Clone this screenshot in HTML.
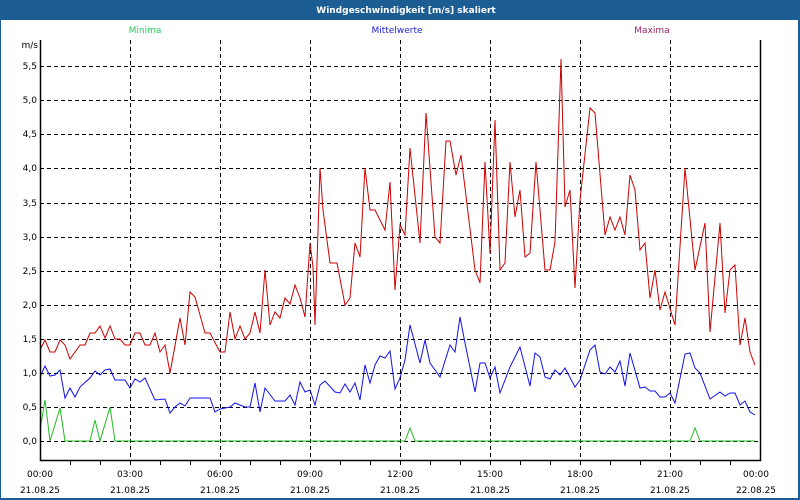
<!DOCTYPE html>
<html><head><meta charset="utf-8"><style>
html,body{margin:0;padding:0;width:800px;height:500px;overflow:hidden;background:#1c5e94}
svg{display:block}
text{font-family:"DejaVu Sans","Liberation Sans",sans-serif;font-size:9px}
</style></head><body>
<svg width="800" height="500" viewBox="0 0 800 500">
<rect x="0" y="0" width="800" height="500" fill="#1c5e94"/>
<rect x="1" y="20" width="797" height="478" fill="#fff"/>
<text x="406" y="13" text-anchor="middle" fill="#fff" font-weight="bold" style="font-size:9px">Windgeschwindigkeit [m/s] skaliert</text>
<text x="145" y="33" text-anchor="middle" fill="#22cc55">Minima</text>
<text x="397" y="33" text-anchor="middle" fill="#2222dd">Mittelwerte</text>
<text x="652" y="33" text-anchor="middle" fill="#992266">Maxima</text>
<text x="38" y="48" text-anchor="end" fill="#000">m/s</text>
<g stroke="#000" stroke-dasharray="4,3" stroke-width="1">
<line x1="40" y1="441.5" x2="760" y2="441.5"/><line x1="40" y1="407.5" x2="760" y2="407.5"/>
<line x1="40" y1="373.5" x2="760" y2="373.5"/><line x1="40" y1="339.5" x2="760" y2="339.5"/>
<line x1="40" y1="305.5" x2="760" y2="305.5"/><line x1="40" y1="271.5" x2="760" y2="271.5"/>
<line x1="40" y1="237.5" x2="760" y2="237.5"/><line x1="40" y1="203.5" x2="760" y2="203.5"/>
<line x1="40" y1="168.5" x2="760" y2="168.5"/><line x1="40" y1="134.5" x2="760" y2="134.5"/>
<line x1="40" y1="100.5" x2="760" y2="100.5"/><line x1="40" y1="66.5" x2="760" y2="66.5"/>
<line x1="130.5" y1="40" x2="130.5" y2="460"/><line x1="220.5" y1="40" x2="220.5" y2="460"/>
<line x1="310.5" y1="40" x2="310.5" y2="460"/><line x1="400.5" y1="40" x2="400.5" y2="460"/>
<line x1="490.5" y1="40" x2="490.5" y2="460"/><line x1="580.5" y1="40" x2="580.5" y2="460"/>
<line x1="670.5" y1="40" x2="670.5" y2="460"/>
</g>
<g fill="#000" text-anchor="end">
<text x="37" y="444">0,0</text><text x="37" y="410">0,5</text><text x="37" y="376">1,0</text>
<text x="37" y="342">1,5</text><text x="37" y="308">2,0</text><text x="37" y="274">2,5</text>
<text x="37" y="240">3,0</text><text x="37" y="206">3,5</text><text x="37" y="171">4,0</text>
<text x="37" y="137">4,5</text><text x="37" y="103">5,0</text><text x="37" y="69">5,5</text>
</g>
<polyline fill="none" stroke="#22bb22" points="40,430 45,400 50,441 60,408 65,441 90,441 95,420 100,441 110,407 115,441 405,441 410,428 415,441 690,441 695,428 700,441 755,441"/>
<polyline fill="none" stroke="#1111ee" points="40,377 45,366 50,376 55,375 60,370 65,398 70,388 75,397 80,387 90,378 95,371 100,375 105,370 110,369 115,380 125,380 130,388 135,379 140,382 145,378 155,400 165,399 170,413 175,407 180,403 185,406 190,398 200,398 210,398 215,412 220,409 230,407 235,403 245,407 250,407 255,383 260,412 265,388 275,401 285,401 290,395 295,405 300,382 305,392 310,390 315,405 320,385 325,381 335,392 340,393 345,384 350,392 355,383 360,400 365,365 370,383 375,365 380,356 385,358 390,351 395,389 400,378 405,360 410,325 420,363 425,340 430,363 440,377 450,345 455,352 460,317 465,343 475,392 480,363 485,363 490,378 495,367 500,393 510,367 520,347 530,386 535,353 540,357 545,377 550,379 555,370 560,375 565,368 575,387 580,380 590,350 595,345 600,372 605,374 610,367 615,372 620,361 625,386 630,353 640,388 645,387 650,391 655,391 660,397 665,397 670,393 675,403 685,354 690,353 695,368 700,373 710,399 720,392 725,396 730,393 735,393 740,405 745,401 750,412 755,415"/>
<polyline fill="none" stroke="#cc0000" points="40,350 45,340 50,352 55,352 60,340 65,345 70,359 80,345 85,345 90,333 95,333 100,326 105,338 110,326 115,339 120,339 125,345 130,345 135,333 140,333 145,345 150,345 155,333 160,352 165,345 170,373 180,318 185,345 190,292 195,297 205,333 210,333 220,352 225,352 230,312 235,339 240,326 245,339 250,333 255,312 260,333 265,270 270,325 275,312 280,318 285,298 290,304 295,285 300,298 305,317 310,243 313,267 315,325 320,168 323,210 330,263 337,263 345,305 350,298 355,243 360,257 365,168 370,210 375,210 385,230 390,182 395,290 400,225 405,235 410,148 420,243 426,113 435,237 440,243 446,141 450,141 456,175 461,155 475,270 480,283 485,162 490,253 495,120 500,270 505,263 510,162 515,217 520,190 525,257 530,253 536,162 545,270 550,270 555,242 561,59 565,207 570,190 575,288 580,200 590,108 595,113 605,235 610,217 615,230 620,217 625,235 630,175 635,190 640,250 645,243 650,298 655,270 660,310 665,292 675,325 685,168 695,270 705,223 710,332 720,223 725,313 730,270 735,265 740,345 745,318 750,352 755,365"/>
<g stroke="#000" stroke-width="1.5" fill="none">
<polyline points="40.5,40 40.5,460.5 760.5,460.5 760.5,40"/>
</g>
<g stroke="#000">
<line x1="70.5" y1="460" x2="70.5" y2="465"/><line x1="100.5" y1="460" x2="100.5" y2="465"/><line x1="130.5" y1="460" x2="130.5" y2="465"/><line x1="160.5" y1="460" x2="160.5" y2="465"/><line x1="190.5" y1="460" x2="190.5" y2="465"/><line x1="220.5" y1="460" x2="220.5" y2="465"/><line x1="250.5" y1="460" x2="250.5" y2="465"/><line x1="280.5" y1="460" x2="280.5" y2="465"/><line x1="310.5" y1="460" x2="310.5" y2="465"/><line x1="340.5" y1="460" x2="340.5" y2="465"/><line x1="370.5" y1="460" x2="370.5" y2="465"/><line x1="400.5" y1="460" x2="400.5" y2="465"/><line x1="430.5" y1="460" x2="430.5" y2="465"/><line x1="460.5" y1="460" x2="460.5" y2="465"/><line x1="490.5" y1="460" x2="490.5" y2="465"/><line x1="520.5" y1="460" x2="520.5" y2="465"/><line x1="550.5" y1="460" x2="550.5" y2="465"/><line x1="580.5" y1="460" x2="580.5" y2="465"/><line x1="610.5" y1="460" x2="610.5" y2="465"/><line x1="640.5" y1="460" x2="640.5" y2="465"/><line x1="670.5" y1="460" x2="670.5" y2="465"/><line x1="700.5" y1="460" x2="700.5" y2="465"/><line x1="730.5" y1="460" x2="730.5" y2="465"/>
</g>
<g fill="#000" text-anchor="middle">
<text x="40" y="477">00:00</text><text x="40" y="493">21.08.25</text>
<text x="130" y="477">03:00</text><text x="130" y="493">21.08.25</text>
<text x="220" y="477">06:00</text><text x="220" y="493">21.08.25</text>
<text x="310" y="477">09:00</text><text x="310" y="493">21.08.25</text>
<text x="400" y="477">12:00</text><text x="400" y="493">21.08.25</text>
<text x="490" y="477">15:00</text><text x="490" y="493">21.08.25</text>
<text x="580" y="477">18:00</text><text x="580" y="493">21.08.25</text>
<text x="670" y="477">21:00</text><text x="670" y="493">21.08.25</text>
<text x="756" y="477">00:00</text><text x="756" y="493">22.08.25</text>
</g>
</svg>
</body></html>
